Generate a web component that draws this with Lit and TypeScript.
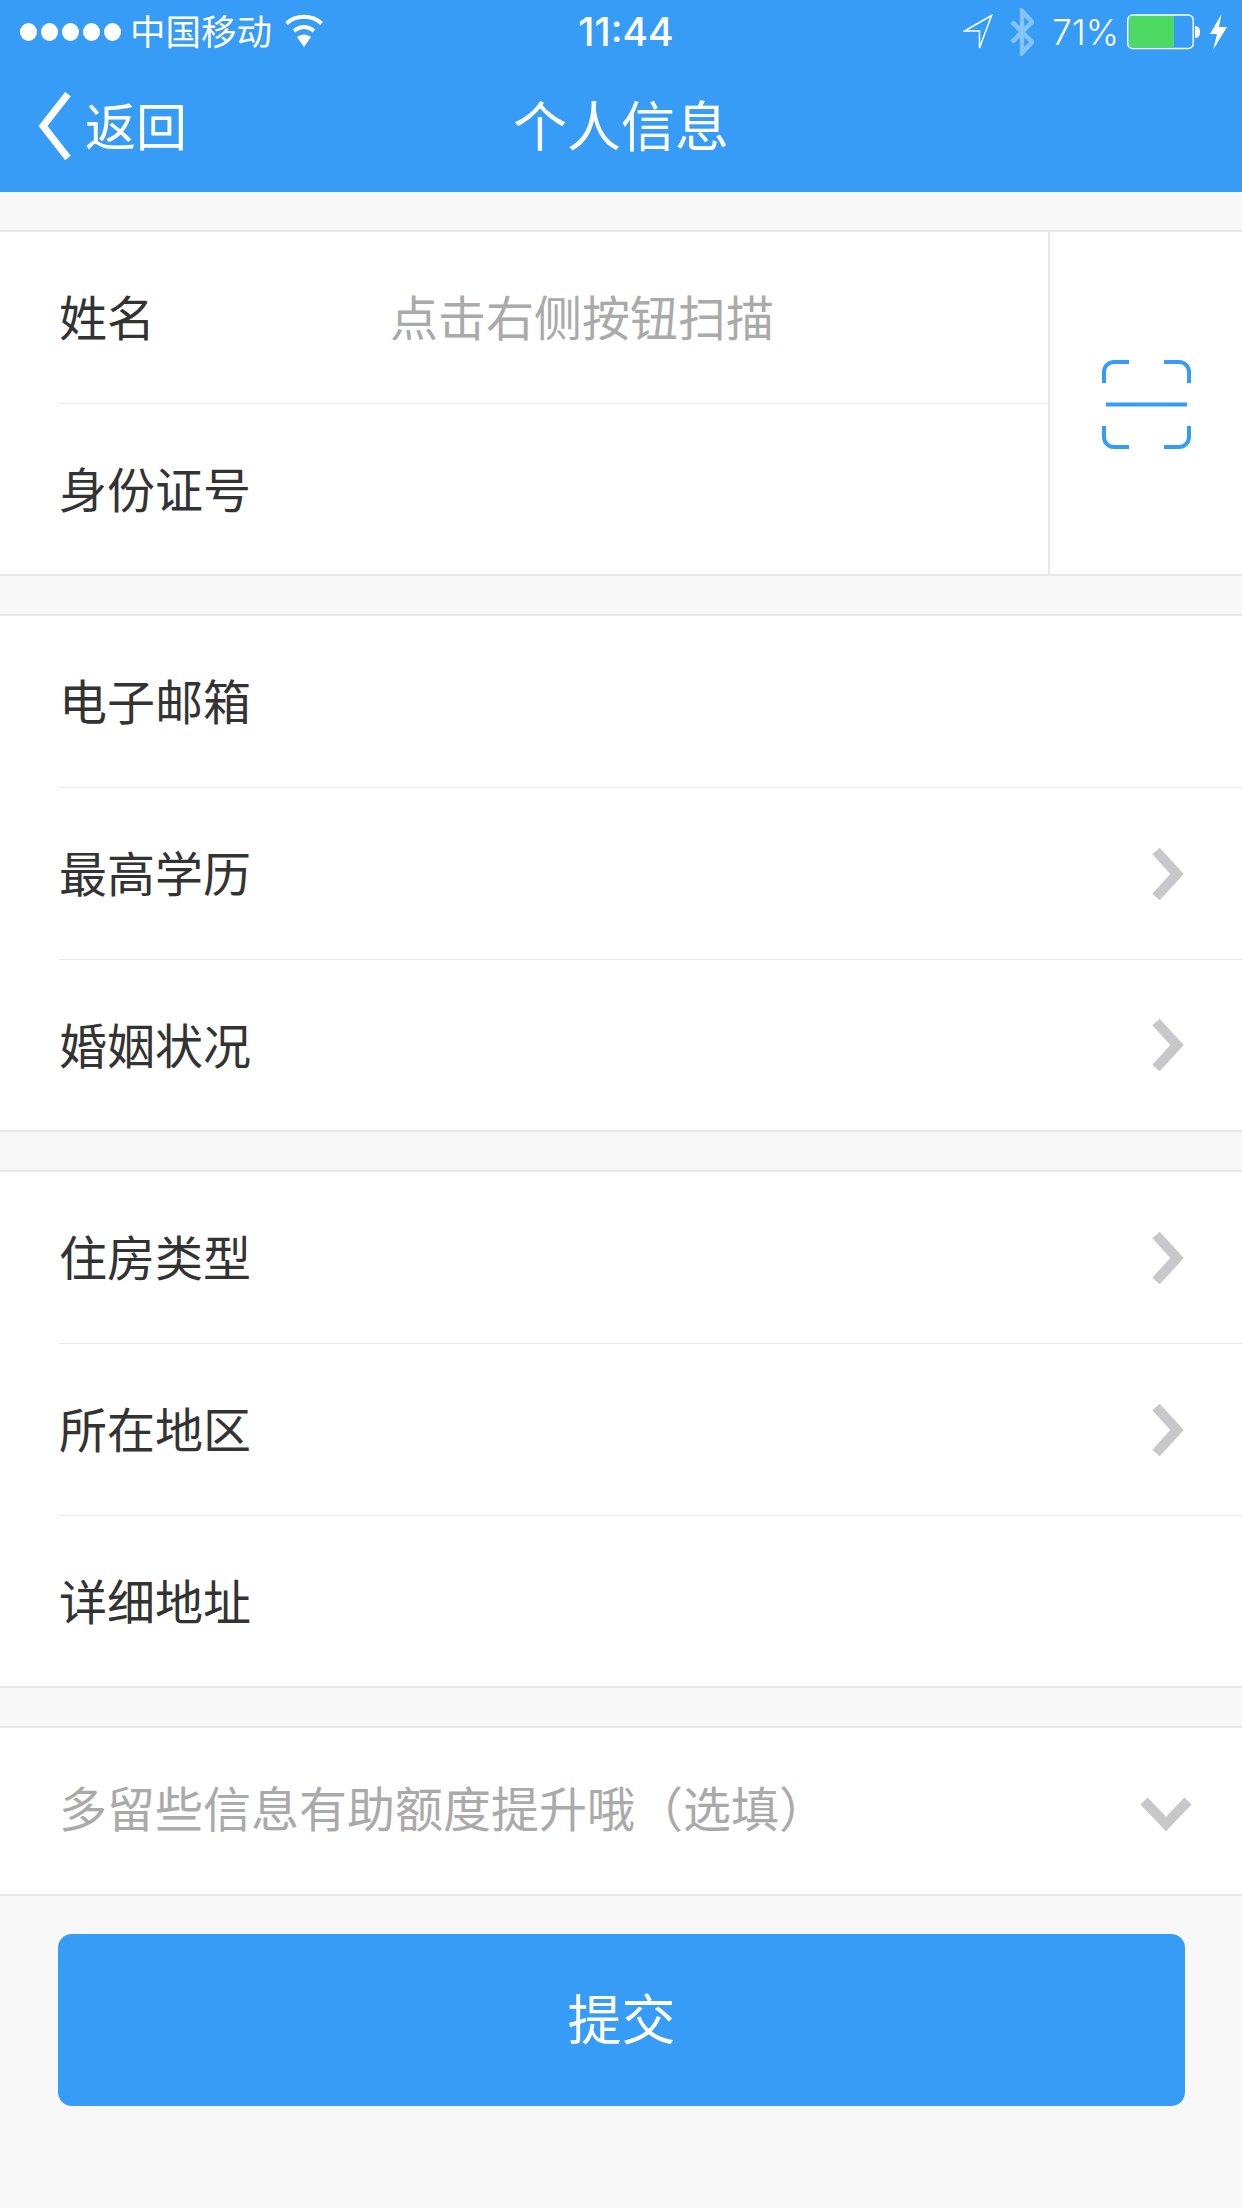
import { LitElement, html, css } from "lit";
import { customElement } from "lit/decorators.js";

const chevron = html`<svg class="chev" width="34" height="56" viewBox="0 0 34 56"><path d="M6 5l21 23L6 51" fill="none" stroke="#c7c7cc" stroke-width="10"/></svg>`;

@customElement("app-root")
export class AppRoot extends LitElement {
  static styles = css`
    :host { display: block; width: 1242px; height: 2208px; background: #f8f8f8; overflow: hidden;
      font-family: "Noto Sans CJK SC", "Noto Sans", sans-serif; color: #333; }
    .head { background: #369cf5; height: 192px; color: #fff; display: flex; flex-direction: column; }
    .status { height: 60px; display: flex; align-items: center; padding: 4px 14px 0 20px; box-sizing: border-box; position: relative; font-size: 35.500px; }
    .dots { display: flex; gap: 4px; margin-right: 9px; }
    .dots i { width: 17px; height: 18px; border-radius: 50%; background: #fff; display: block; }
    .carrier { line-height: 60px; font-weight: 400; margin-bottom: 4px; }
    .wifi { margin-left: 13px; margin-bottom: 2px; }
    .time { position: absolute; left: 10px; right: 0; top: 12px; text-align: center; font-family: Inter, Roboto, sans-serif; font-weight: 500; font-size: 39px; line-height: 40px; }
    .sright { margin-left: auto; display: flex; align-items: center; }
    .pct { font-family: Inter, Roboto, sans-serif; font-weight: 300; font-size: 35.500px; margin: 2px 8px 0 18px; line-height: 40px; }
    .nav { flex: 1; display: flex; align-items: center; position: relative; padding: 0 0 0 38px; }
    .back { font-size: 51px; font-weight: 400; margin-left: 13px; line-height: 60px; margin-bottom: 5px; }
    .title { position: absolute; left: 0; right: 0; text-align: center; font-size: 54px; font-weight: 400; line-height: 60px; margin-bottom: 5px; }
    .group { margin-top: 38px; background: #fff; border-top: 2px solid #e8e8e8; border-bottom: 2px solid #e8e8e8; }
    .group.first { display: flex; }
    .rows { flex: 1; min-width: 0; }
    .scan { width: 194px; flex: none; border-left: 2px solid #e8e8e8; box-sizing: border-box; display: flex; align-items: center; justify-content: center; padding: 4px 0 0 2px; }
    .row { height: 171px; margin-left: 59px; display: flex; align-items: center; font-size: 48px; font-weight: 400; border-bottom: 1px solid #e8e8e8; box-sizing: content-box; }
    .row:last-child { border-bottom: 0; height: 170px; }
    .label { width: 331px; flex: none; margin-bottom: 5px; }
    .ph { color: #aaa; margin-bottom: 5px; }
    .chev { margin-left: auto; margin-right: 58px; }
    .more { height: 166px; display: flex; align-items: center; padding: 0 49px 0 59px; font-size: 48px; font-weight: 400; color: #aaa; justify-content: space-between; }
    .more span { margin-bottom: 10px; }
    .more svg { margin-top: 6px; }
    .foot { padding: 38px 57px 0 58px; }
    .btn { height: 172px; border-radius: 14px; background: #369cf5; color: #fff; font-size: 54px; font-weight: 400; display: flex; align-items: center; justify-content: center; }
    .btn span { margin-bottom: 7px; }
  `;

  row(label: string, opt: { ph?: string; chev?: boolean } = {}) {
    return html`<div class="row">
      <span class="label">${label}</span>
      ${opt.ph ? html`<span class="ph">${opt.ph}</span>` : ""}
      ${opt.chev ? chevron : ""}
    </div>`;
  }

  render() {
    return html`
      <div class="head">
        <div class="status">
          <div class="dots"><i></i><i></i><i></i><i></i><i></i></div>
          <span class="carrier">中国移动</span>
          <svg class="wifi" width="38" height="34" viewBox="0 0 38 34">
            <path d="M1.5 9.5C11 .5 27 .5 36.500 9.500" fill="none" stroke="#fff" stroke-width="4"/>
            <path d="M9 17c6-5.500 14-5.500 20 0" fill="none" stroke="#fff" stroke-width="4"/>
            <path d="M12 23c4.500-3.500 9.500-3.500 14 0L19 33z" fill="#fff"/>
          </svg>
          <div class="time">11:44</div>
          <div class="sright">
            <svg width="30" height="36" viewBox="0 0 30 36"><path d="M28.500 1.500L1.500 17h15v17z" fill="none" stroke="#fff" stroke-width="1.500"/></svg>
            <svg style="margin-left:17px" width="24" height="48" viewBox="0 0 24 48"><path d="M2 14l20 20-10 11V3l10 11L2 34" fill="none" stroke="#fff" stroke-opacity=".4" stroke-width="4.500"/></svg>
            <span class="pct">71%</span>
            <svg width="74" height="36" viewBox="0 0 74 36">
              <rect x=".75" y="1" width="65.500" height="33.500" rx="5" fill="none" stroke="#fff" stroke-width="1.500"/>
              <path d="M2 5a3 3 0 0 1 3-3h42v31.500H5a3 3 0 0 1-3-3z" fill="#4cd964"/>
              <path d="M68 12c3 0 5 2 5 6s-2 6-5 6z" fill="#fff"/>
            </svg>
            <svg style="margin-left:9px" width="18" height="36" viewBox="0 0 18 36"><path d="M11.500 0L0 20h7L3 36 17 13H9z" fill="#fff"/></svg>
          </div>
        </div>
        <div class="nav">
          <svg width="34" height="70" viewBox="0 0 34 70"><path d="M30 3L5 35l25 32" fill="none" stroke="#fff" stroke-width="7"/></svg>
          <span class="back">返回</span>
          <div class="title">个人信息</div>
        </div>
      </div>

      <div class="group first">
        <div class="rows">
          ${this.row("姓名", { ph: "点击右侧按钮扫描" })}
          ${this.row("身份证号")}
        </div>
        <div class="scan">
          <svg width="90" height="92" viewBox="0 0 90 92">
            <g fill="none" stroke="#369cf5" stroke-width="4">
              <path d="M27 3H12a10 10 0 0 0-10 10v11"/>
              <path d="M62 3h15a10 10 0 0 1 10 10v11"/>
              <path d="M27 88H12a10 10 0 0 1-10-10V67"/>
              <path d="M62 88h15a10 10 0 0 0 10-10V67"/>
              <path d="M4 45.500h81"/>
            </g>
          </svg>
        </div>
      </div>

      <div class="group">
        ${this.row("电子邮箱")}
        ${this.row("最高学历", { chev: true })}
        ${this.row("婚姻状况", { chev: true })}
      </div>

      <div class="group">
        ${this.row("住房类型", { chev: true })}
        ${this.row("所在地区", { chev: true })}
        ${this.row("详细地址")}
      </div>

      <div class="group">
        <div class="more">
          <span>多留些信息有助额度提升哦（选填）</span>
          <svg width="54" height="36" viewBox="0 0 54 36"><path d="M5 5l22 23L49 5" fill="none" stroke="#c7c7cc" stroke-width="10"/></svg>
        </div>
      </div>

      <div class="foot"><div class="btn"><span>提交</span></div></div>
    `;
  }
}
